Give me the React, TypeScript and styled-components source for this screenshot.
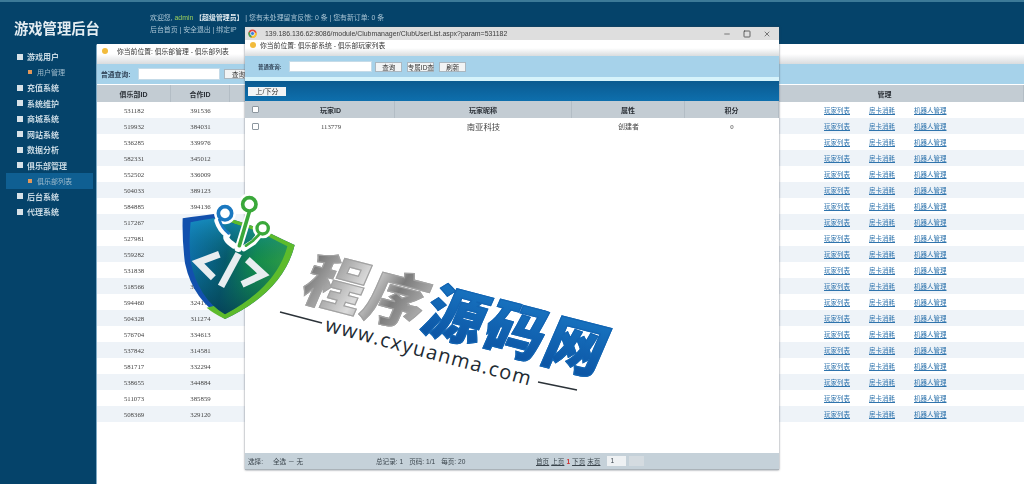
import React from "react";
import styled, { createGlobalStyle } from "styled-components";
import { Minus, Square, X } from "lucide-react";

const Global = createGlobalStyle`
  html, body { margin: 0; padding: 0; width: 1024px; height: 484px; overflow: hidden; background: #05436a; }
  * { box-sizing: border-box; }
  #root { width: 1024px; height: 484px; }
`;

const FONT = `"Liberation Sans", "Noto Sans CJK SC", sans-serif`;

const Stage = styled.div`
  position: relative;
  width: 1024px;
  height: 484px;
  overflow: hidden;
  font-family: ${FONT};
  background: #05436a;
`;
const Soft = styled.div`
  position: absolute;
  inset: 0;
  filter: blur(0.5px);
`;
const TopBar = styled.header`
  display: flex;
  height: 44px;
  border-top: 2px solid #3c7a98;
  background: #05436a;
  color: #a9c4d4;
`;
const Brand = styled.h1`
  width: 150px;
  margin: 0;
  padding: 18px 0 0 14px;
  font-size: 14.3px;
  line-height: 18px;
  font-weight: 700;
  color: #e4edf2;
  white-space: nowrap;
`;
const Welcome = styled.div`
  padding-top: 10px;
  font-size: 6.9px;
  line-height: 12px;
  white-space: nowrap;
`;
const Admin = styled.span`
  color: #9ccf5c;
`;
const Strong = styled.b`
  color: #e4edf2;
`;
const Body = styled.div`
  display: flex;
  height: 440px;
`;
const Side = styled.nav`
  width: 96px;
  padding-top: 5px;
  flex: none;
`;
const Item = styled.div`
  display: flex;
  align-items: center;
  height: 15.5px;
  padding-left: 17px;
  gap: 4px;
  font-size: 8px;
  font-weight: 700;
  color: #c9dae4;
  white-space: nowrap;
`;
const Bullet = styled.i`
  width: 6px;
  height: 6px;
  background: #d8e2e8;
`;
const SubItem = styled.div<{ $active?: boolean }>`
  display: flex;
  align-items: center;
  height: 15.5px;
  margin: 0 3px 0 6px;
  padding-left: 22px;
  gap: 5px;
  font-size: 7px;
  color: #9fbccd;
  background: ${(p) => (p.$active ? "#0f5f92" : "transparent")};
  white-space: nowrap;
`;
const SubDot = styled.i`
  width: 4px;
  height: 4px;
  background: #e2985a;
`;
const Main = styled.main`
  flex: 1;
  background: #fff;
  border-left: 1px solid #7fa9c4;
  border-top-left-radius: 2px;
`;
const Crumb = styled.div<{ $h: number; $pad: number; $gap: number }>`
  display: flex;
  align-items: center;
  gap: ${(p) => p.$gap}px;
  height: ${(p) => p.$h}px;
  padding: 0 0 6px ${(p) => p.$pad}px;
  font-size: 6.8px;
  color: #333;
  background: linear-gradient(#fff 0%, #fff 50%, #d9dcde 100%);
  white-space: nowrap;
`;
const Dot = styled.i`
  width: 6px;
  height: 6px;
  border-radius: 50%;
  background: #f2bb3c;
`;
const SearchBar = styled.div<{ $h: number; $pad: number; $fs: number }>`
  display: flex;
  align-items: center;
  height: ${(p) => p.$h}px;
  padding-left: ${(p) => p.$pad}px;
  background: #a6d2ea;
  font-size: ${(p) => p.$fs}px;
  font-weight: 700;
  color: #33465a;
  white-space: nowrap;
`;
const TextInput = styled.div<{ $w: number; $h: number; $ml: number }>`
  width: ${(p) => p.$w}px;
  height: ${(p) => p.$h}px;
  margin-left: ${(p) => p.$ml}px;
  background: #fff;
  border: 1px solid #c5dbe8;
`;
const Btn = styled.div<{ $w: number; $ml: number }>`
  display: flex;
  align-items: center;
  justify-content: center;
  width: ${(p) => p.$w}px;
  height: 10px;
  margin-left: ${(p) => p.$ml}px;
  background: #f2f4f5;
  border: 1px solid #aab7c0;
  font-size: 6.5px;
  font-weight: 400;
  color: #333;
`;
const MainHead = styled.div`
  display: grid;
  grid-template-columns: 74px 59px 516px 1fr;
  height: 17px;
  background: #c3ccd3;
  margin-top: 1px;
`;
const Th = styled.div`
  display: flex;
  align-items: center;
  justify-content: center;
  font-size: 7px;
  font-weight: 700;
  color: #2a2f36;
  border-right: 1px solid #b3bdc5;
`;
const Row = styled.div<{ $alt: boolean }>`
  display: grid;
  grid-template-columns: 74px 59px 516px 1fr;
  height: 16px;
  background: ${(p) => (p.$alt ? "#eef3f8" : "#fff")};
`;
const Td = styled.div`
  display: flex;
  align-items: center;
  justify-content: center;
  font-family: "Liberation Serif", serif;
  font-size: 6.8px;
  color: #444;
`;
const Links = styled.div`
  display: flex;
  align-items: center;
  gap: 19px;
  padding-left: 78px;
`;
const Link = styled.a`
  font-size: 6.5px;
  color: #2f74ad;
  text-decoration: underline;
  white-space: nowrap;
`;

const Popup = styled.section`
  position: absolute;
  left: 245px;
  top: 27px;
  width: 534px;
  height: 443px;
  display: flex;
  flex-direction: column;
  background: #fff;
  box-shadow: 0 0 2px rgba(60, 70, 80, 0.7);
`;
const TitleBar = styled.div`
  display: flex;
  align-items: center;
  flex: none;
  height: 13px;
  padding: 0 0 0 3px;
  background: #dedede;
  font-size: 6.95px;
  color: #3c3c3c;
  white-space: nowrap;
`;
const Url = styled.span`
  margin-left: 8px;
  flex: 1;
`;
const WinBtns = styled.div`
  display: flex;
  align-items: center;
  gap: 12px;
  padding-right: 8px;
  color: #444;
`;
const Strip = styled.div`
  height: 4px;
  flex: none;
  background: #d6f3fb;
`;
const Tool = styled.div`
  display: flex;
  align-items: center;
  flex: none;
  height: 20px;
  padding-left: 3px;
  background: linear-gradient(#0a5a90, #0e6fad);
`;
const ToolBtn = styled.div`
  display: flex;
  align-items: center;
  justify-content: center;
  width: 38px;
  height: 9px;
  background: #f2f4f5;
  font-size: 7px;
  color: #333;
`;
const PopHead = styled.div`
  display: grid;
  grid-template-columns: 22px 128px 177px 113px 1fr;
  flex: none;
  height: 17px;
  background: #c3ccd3;
`;
const PopRow = styled.div`
  display: grid;
  grid-template-columns: 22px 128px 177px 113px 1fr;
  flex: none;
  height: 16px;
`;
const Check = styled.i`
  display: block;
  width: 7px;
  height: 7px;
  background: #fff;
  border: 1px solid #8d979f;
  border-radius: 1px;
`;
const CheckCell = styled.div`
  display: flex;
  align-items: center;
  justify-content: center;
  padding-right: 1px;
`;
const Nick = styled.div`
  display: flex;
  align-items: center;
  justify-content: center;
  font-size: 8.4px;
  color: #444;
`;
const Plain = styled.div`
  display: flex;
  align-items: center;
  justify-content: center;
  font-size: 7px;
  color: #444;
`;
const Fill = styled.div`
  flex: 1;
`;
const Foot = styled.div`
  display: flex;
  align-items: center;
  flex: none;
  height: 17px;
  padding-left: 3px;
  background: #c5d1d9;
  border-bottom: 1px solid #aab2b8;
  font-size: 6.6px;
  color: #3a444c;
  white-space: nowrap;
`;
const FootGroup = styled.div<{ $w: number; $gap: number }>`
  display: flex;
  align-items: center;
  flex: none;
  width: ${(p) => p.$w}px;
  gap: ${(p) => p.$gap}px;
`;
const Pg = styled.span`
  text-decoration: underline;
`;
const Red = styled.span`
  color: #d03030;
  font-weight: 700;
`;
const PgInput = styled.div<{ $w: number; $bg: string; $ml: number }>`
  width: ${(p) => p.$w}px;
  height: 10px;
  margin-left: ${(p) => p.$ml}px;
  padding-left: 3px;
  line-height: 10px;
  background: ${(p) => p.$bg};
`;

const Watermark = styled.div`
  position: absolute;
  inset: 0;
  pointer-events: none;
`;
const Shield = styled.svg`
  position: absolute;
  left: 170px;
  top: 185px;
`;
const Rules = styled.svg`
  position: absolute;
  left: 0;
  top: 0;
`;
const Slogan = styled.div`
  position: absolute;
  left: 459px;
  top: 312px;
  transform: translate(-50%, -50%) rotate(14.5deg) skewX(-9deg);
  font-family: "Noto Sans CJK SC", sans-serif;
  font-size: 60px;
  line-height: 70px;
  font-weight: 900;
  letter-spacing: 2px;
  white-space: nowrap;
`;
const Grey = styled.span`
  background: linear-gradient(100deg, #6d6d6d, #dcdcdc 45%, #7c7c7c 70%, #bdbdbd);
  -webkit-background-clip: text;
  background-clip: text;
  color: transparent;
  -webkit-text-stroke: 1.2px #a2a2a2;
`;
const Blue = styled.span`
  background: linear-gradient(#1b7cc8, #0a4f9f);
  -webkit-background-clip: text;
  background-clip: text;
  color: transparent;
  -webkit-text-stroke: 1.2px #1264b2;
`;
const Site = styled.div`
  position: absolute;
  left: 429px;
  top: 351px;
  transform: translate(-50%, -50%) rotate(15deg);
  font-family: "Open Sans", sans-serif;
  font-size: 20px;
  letter-spacing: 1.3px;
  color: #222b33;
  white-space: nowrap;
`;

const rows = [
  ["531182", "391536"], ["519932", "384031"], ["536285", "339976"], ["582331", "345012"],
  ["552502", "336009"], ["504033", "389123"], ["584885", "394136"], ["517267", "301842"],
  ["527981", "322170"], ["559282", "318846"], ["531838", "340725"], ["518566", "327391"],
  ["594460", "324178"], ["504328", "311274"], ["576704", "334613"], ["537842", "314581"],
  ["581717", "332294"], ["538655", "344884"], ["511073", "385859"], ["508369", "329120"],
];
const menu = ["充值系统", "系统维护", "商城系统", "网站系统", "数据分析", "俱乐部管理"];

const ChromeIcon = () => (
  <svg width="9" height="9" viewBox="0 0 24 24">
    <circle cx="12" cy="12" r="11" fill="#e0463a" />
    <path d="M12 12 L2 8 A11 11 0 0 0 9 23 Z" fill="#3fa650" />
    <path d="M12 12 L23 9 A11 11 0 0 1 9 23 Z" fill="#f5c533" />
    <circle cx="12" cy="12" r="5.5" fill="#3d7fe0" stroke="#fff" strokeWidth="2" />
  </svg>
);

export default function App() {
  return (
    <Stage>
      <Global />
      <Soft>
        <TopBar>
          <Brand>游戏管理后台</Brand>
          <Welcome>
            欢迎您, <Admin>admin</Admin> <Strong>【超级管理员】</Strong> | 您有未处理留言反馈: 0 条 | 您有新订单: 0 条
            <br />
            后台首页 | 安全退出 | 绑定IP
          </Welcome>
        </TopBar>
        <Body>
          <Side>
            <Item><Bullet />游戏用户</Item>
            <SubItem><SubDot />用户管理</SubItem>
            {menu.map((m) => (
              <Item key={m}><Bullet />{m}</Item>
            ))}
            <SubItem $active><SubDot />俱乐部列表</SubItem>
            <Item><Bullet />后台系统</Item>
            <Item><Bullet />代理系统</Item>
          </Side>
          <Main>
            <Crumb $h={20} $pad={5} $gap={9}><Dot />你当前位置: 俱乐部管理 - 俱乐部列表</Crumb>
            <SearchBar $h={20} $pad={4} $fs={6.8}>
              普通查询:
              <TextInput $w={82} $h={12} $ml={8} />
              <Btn $w={28} $ml={4}>查询</Btn>
            </SearchBar>
            <MainHead>
              <Th>俱乐部ID</Th>
              <Th>合作ID</Th>
              <Th />
              <Th>管理</Th>
            </MainHead>
            {rows.map((r, i) => (
              <Row key={r[0]} $alt={i % 2 === 1}>
                <Td>{r[0]}</Td>
                <Td>{r[1]}</Td>
                <Td />
                <Links>
                  <Link>玩家列表</Link>
                  <Link>房卡消耗</Link>
                  <Link>机器人管理</Link>
                </Links>
              </Row>
            ))}
          </Main>
        </Body>
        <Popup>
          <TitleBar>
            <ChromeIcon />
            <Url>139.186.136.62:8086/module/Clubmanager/ClubUserList.aspx?param=531182</Url>
            <WinBtns>
              <Minus size={8} />
              <Square size={8} strokeWidth={2.4} />
              <X size={8} />
            </WinBtns>
          </TitleBar>
          <Crumb $h={16} $pad={5} $gap={4}><Dot />你当前位置: 俱乐部系统 - 俱乐部玩家列表</Crumb>
          <SearchBar $h={21} $pad={13} $fs={5.4}>
            普通查询:
            <TextInput $w={83} $h={11} $ml={8} />
            <Btn $w={27} $ml={3}>查询</Btn>
            <Btn $w={27} $ml={5}>专属ID查</Btn>
            <Btn $w={27} $ml={5}>刷新</Btn>
          </SearchBar>
          <Strip />
          <Tool><ToolBtn>上/下分</ToolBtn></Tool>
          <PopHead>
            <CheckCell><Check /></CheckCell>
            <Th>玩家ID</Th>
            <Th>玩家昵称</Th>
            <Th>属性</Th>
            <Th>积分</Th>
          </PopHead>
          <PopRow>
            <CheckCell><Check /></CheckCell>
            <Td>113779</Td>
            <Nick>南亚科技</Nick>
            <Plain>创建者</Plain>
            <Td>0</Td>
          </PopRow>
          <Fill />
          <Foot>
            <FootGroup $w={128} $gap={10}>
              选择:
              <span>全选 － 无</span>
            </FootGroup>
            <FootGroup $w={160} $gap={6}>
              <span>总记录: 1</span>
              <span>页码: 1/1</span>
              <span>每页: 20</span>
            </FootGroup>
            <FootGroup $w={110} $gap={2}>
              <Pg>首页</Pg>
              <Pg>上页</Pg>
              <Red>1</Red>
              <Pg>下页</Pg>
              <Pg>末页</Pg>
              <PgInput $w={19} $bg="#eef1f3" $ml={5}>1</PgInput>
              <PgInput $w={15} $bg="#d4dbe0" $ml={1} />
            </FootGroup>
          </Foot>
        </Popup>
      </Soft>
      <Watermark>
        <Shield width="230" height="150" viewBox="0 0 690 450">
          <defs>
            <linearGradient id="sh" x1="0" y1="0" x2="1" y2="0.15">
              <stop offset="0" stopColor="#0f72bd" />
              <stop offset="0.42" stopColor="#05556a" />
              <stop offset="0.72" stopColor="#149044" />
              <stop offset="1" stopColor="#2fa040" />
            </linearGradient>
            <linearGradient id="shTop" x1="0" y1="0" x2="0" y2="1">
              <stop offset="0" stopColor="#1a98c8" stopOpacity="0.7" />
              <stop offset="0.45" stopColor="#0a6a70" stopOpacity="0.15" />
              <stop offset="1" stopColor="#043a55" stopOpacity="0.75" />
            </linearGradient>
          </defs>
          <path d="M38 100 Q90 92 132 87 Q250 120 300 145 Q340 165 374 180 Q340 320 165 402 Q70 350 45 235 Q36 165 38 100Z" fill="#1250ad" />
          <path d="M132 87 Q250 120 300 145 Q340 165 374 180 Q340 320 165 402 Q130 385 110 368 Q300 330 345 190 Q200 120 132 87Z" fill="#5dbb2c" />
          <path d="M62 112 Q100 104 132 100 Q250 130 296 155 Q325 170 352 184 Q320 305 165 388 Q85 340 62 230 Q56 170 62 112Z" fill="url(#sh)" />
          <path d="M62 112 Q100 104 132 100 Q250 130 296 155 Q325 170 352 184 Q320 305 165 388 Q85 340 62 230 Q56 170 62 112Z" fill="url(#shTop)" />
          <g fill="none" stroke="#fff" strokeLinecap="round" strokeLinejoin="round">
            <path d="M142 108 Q150 135 172 150 Q160 160 192 182" strokeWidth="18" />
            <path d="M240 78 L205 190" strokeWidth="22" />
            <path d="M268 150 L250 172 L222 190" strokeWidth="18" />
            <circle cx="165" cy="85" r="24" strokeWidth="18" />
            <circle cx="238" cy="58" r="24" strokeWidth="18" />
            <circle cx="278" cy="130" r="21" strokeWidth="18" />
          </g>
          <g fill="none" strokeLinecap="round" strokeLinejoin="round">
            <path d="M148 104 Q156 130 176 145" stroke="#1a78c0" strokeWidth="8" />
            <path d="M238 80 L208 182" stroke="#3aa83a" strokeWidth="11" />
            <path d="M266 150 L248 168 L228 182" stroke="#3aa83a" strokeWidth="8" />
            <circle cx="165" cy="85" r="20" stroke="#1a78c0" strokeWidth="11" fill="#fff" />
            <circle cx="238" cy="58" r="20" stroke="#3aa83a" strokeWidth="11" fill="#fff" />
            <circle cx="278" cy="130" r="17" stroke="#3aa83a" strokeWidth="10" fill="#fff" />
          </g>
          <g fill="none" stroke="#e8edf0" strokeWidth="21" strokeLinejoin="miter">
            <path d="M148 208 L84 232 L130 278" />
            <path d="M206 206 L153 304" />
            <path d="M232 224 L280 268 L216 298" />
          </g>
        </Shield>
        <Rules width="1024" height="484" viewBox="0 0 1024 484">
          <path d="M280 312 L322 323" stroke="#2b3238" strokeWidth="1.3" />
          <path d="M538 382 L577 390" stroke="#2b3238" strokeWidth="1.3" />
        </Rules>
        <Slogan><Grey>程序</Grey><Blue>源码网</Blue></Slogan>
        <Site>www.cxyuanma.com</Site>
      </Watermark>
    </Stage>
  );
}
